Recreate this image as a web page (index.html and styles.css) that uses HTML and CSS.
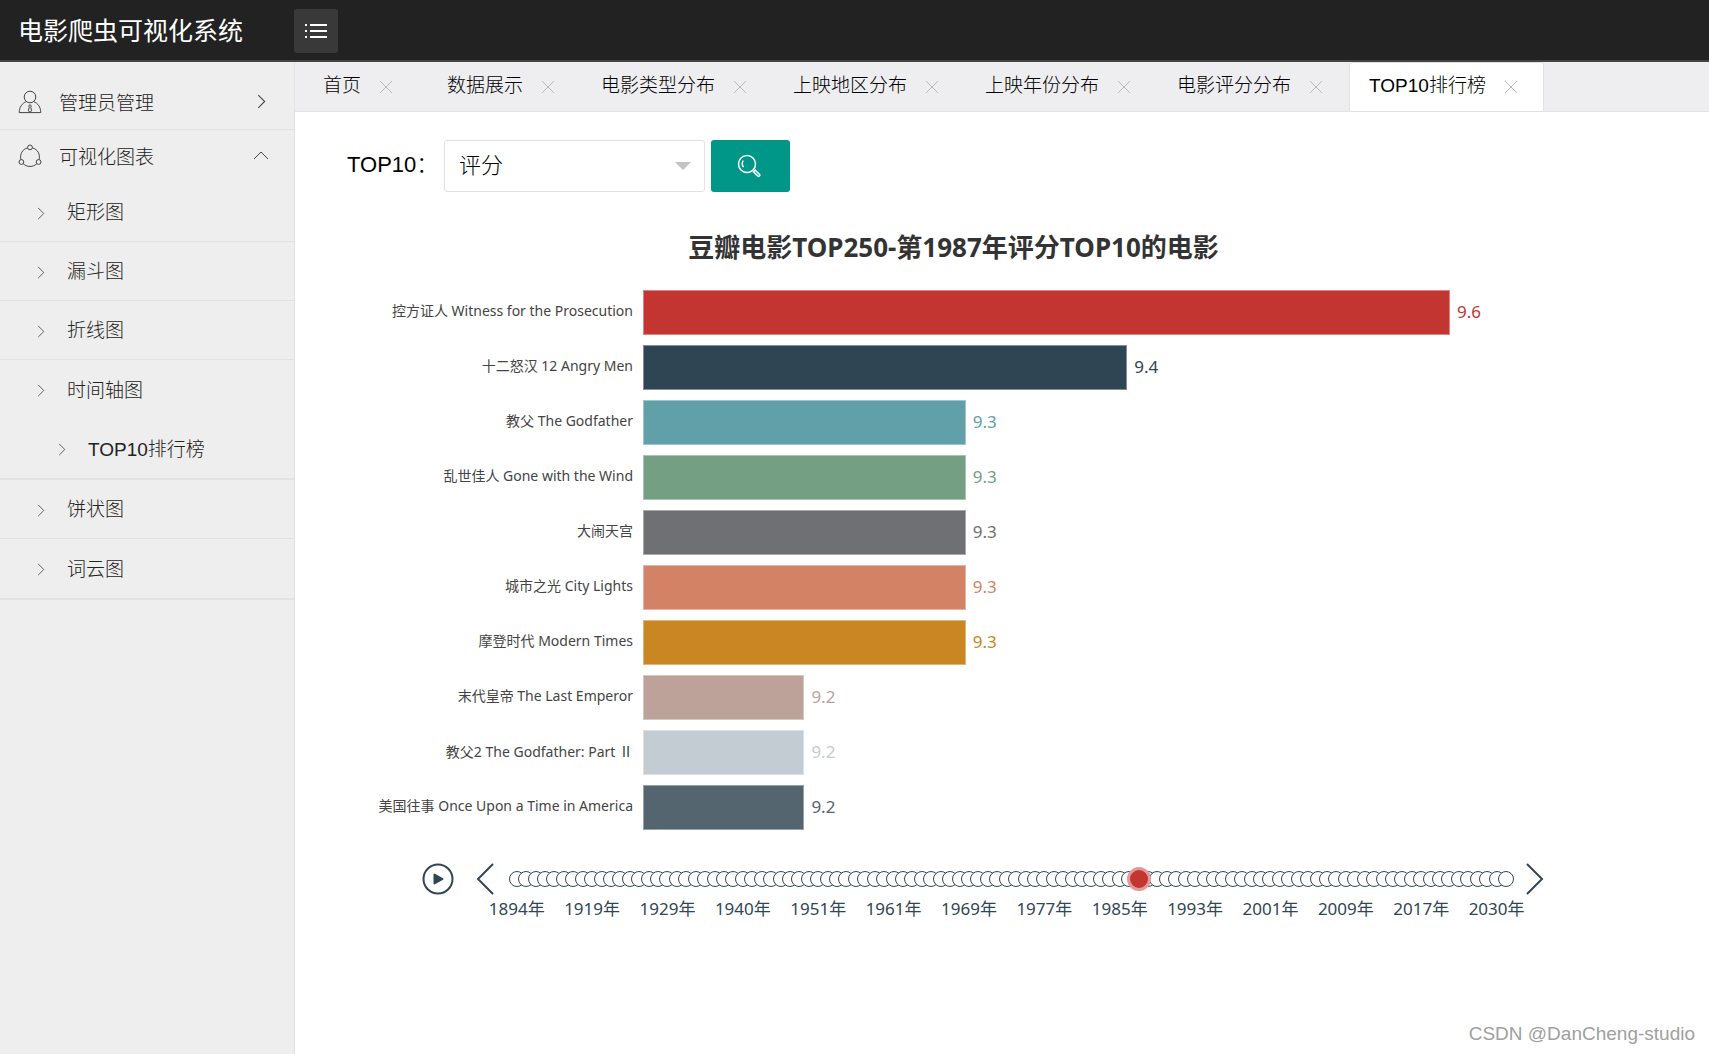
FILE: index.html
```html
<!DOCTYPE html>
<html lang="zh-CN">
<head>
<meta charset="utf-8">
<title>电影爬虫可视化系统</title>
<link rel="stylesheet" href="styles.css">
</head>
<body>
<svg class="sprite" aria-hidden="true">
  <symbol id="i-close" viewBox="0 0 14 14"><path d="M1 1l12 12M13 1L1 13"/></symbol>
  <symbol id="i-right" viewBox="0 0 8 14"><path d="M1 1l6 6-6 6"/></symbol>
</svg>

<header class="header">
  <h1 class="logo">电影爬虫可视化系统</h1>
  <button class="menu-toggle" type="button" aria-label="菜单">
    <svg width="24" height="16" viewBox="0 0 24 16"><path d="M6 2h17M6 8h17M6 14h17M1 2h2M1 8h2M1 14h2"/></svg>
  </button>
</header>

<div class="layout">
  <nav class="sidebar">
    <ul class="menu">
      <li class="group">
        <a class="item" href="#">
          <svg class="icon" width="24" height="24" viewBox="0 0 24 24"><circle cx="12" cy="7" r="5.8"/><path d="M8.3 11.6C4 13.4 1.400 17 1.200 22.600H22.800C22.600 17 20 13.400 15.700 11.600M12 14.500l-1.300 1.500.6 1.300-1 3.500 1.700 1.300 1.700-1.300-1-3.500.6-1.300z"/></svg>
          <span class="name">管理员管理</span>
          <svg class="state" width="9" height="15"><use href="#i-right"/></svg>
        </a>
      </li>
      <li>
        <a class="item" href="#">
          <svg class="icon" width="24" height="24" viewBox="0 0 24 24"><circle cx="12" cy="3.400" r="2.400"/><circle cx="3.400" cy="18" r="2.400"/><circle cx="20.600" cy="18" r="2.400"/><path d="M9.600 3.900C4.300 5.200 1.600 10.300 2.900 15.600M14.400 3.900c5.300 1.300 8 6.400 6.700 11.700M5.200 19.700c3.900 3.700 9.700 3.700 13.600 0"/></svg>
          <span class="name">可视化图表</span>
          <svg class="state up" width="16" height="9" viewBox="0 0 16 9"><path d="M1 8l7-7 7 7"/></svg>
        </a>
        <ul class="submenu">
          <li><a href="#"><svg width="8" height="13"><use href="#i-right"/></svg>矩形图</a></li>
          <li><a href="#"><svg width="8" height="13"><use href="#i-right"/></svg>漏斗图</a></li>
          <li><a href="#"><svg width="8" height="13"><use href="#i-right"/></svg>折线图</a></li>
          <li class="open"><a href="#"><svg width="8" height="13"><use href="#i-right"/></svg>时间轴图</a>
            <ul><li><a class="nested" href="#"><svg width="8" height="13"><use href="#i-right"/></svg>TOP10排行榜</a></li></ul>
          </li>
          <li><a href="#"><svg width="8" height="13"><use href="#i-right"/></svg>饼状图</a></li>
          <li class="open"><a href="#"><svg width="8" height="13"><use href="#i-right"/></svg>词云图</a></li>
        </ul>
      </li>
    </ul>
  </nav>

  <div class="body">
    <ul class="tabs">
      <li class="tab"><a href="#">首页</a><button type="button" aria-label="关闭"><svg width="14" height="14"><use href="#i-close"/></svg></button></li>
      <li class="tab"><a href="#">数据展示</a><button type="button" aria-label="关闭"><svg width="14" height="14"><use href="#i-close"/></svg></button></li>
      <li class="tab"><a href="#">电影类型分布</a><button type="button" aria-label="关闭"><svg width="14" height="14"><use href="#i-close"/></svg></button></li>
      <li class="tab"><a href="#">上映地区分布</a><button type="button" aria-label="关闭"><svg width="14" height="14"><use href="#i-close"/></svg></button></li>
      <li class="tab"><a href="#">上映年份分布</a><button type="button" aria-label="关闭"><svg width="14" height="14"><use href="#i-close"/></svg></button></li>
      <li class="tab"><a href="#">电影评分分布</a><button type="button" aria-label="关闭"><svg width="14" height="14"><use href="#i-close"/></svg></button></li>
      <li class="tab active"><a href="#">TOP10排行榜</a><button type="button" aria-label="关闭"><svg width="14" height="14"><use href="#i-close"/></svg></button></li>
    </ul>

    <main class="content">
      <form class="search">
        <label for="rank">TOP10：</label>
        <div class="select">
          <select id="rank"><option>评分</option></select>
          <svg width="16" height="8" viewBox="0 0 16 8"><path d="M0 0h16L8 8z"/></svg>
        </div>
        <button class="submit" type="button" aria-label="查询">
          <svg width="24" height="24" viewBox="0 0 24 24"><circle cx="10" cy="10" r="8.500"/><path d="M6.400 13.200C4.900 10.800 5 8.300 6.300 6.600"/><path d="M16.400 17.800l1.700-1.700 4.300 4.100c1.200 1.200-.5 2.900-1.700 1.700z"/></svg>
        </button>
      </form>

      <section class="chart">
        <h2>豆瓣电影TOP250-第1987年评分TOP10的电影</h2>
        <ol class="bars">
          <li><span class="film">控方证人 Witness for the Prosecution</span><div class="plot c1"><i class="bar" style="width:100%"></i><b>9.6</b></div></li>
          <li><span class="film">十二怒汉 12 Angry Men</span><div class="plot c2"><i class="bar" style="width:60%"></i><b>9.4</b></div></li>
          <li><span class="film">教父 The Godfather</span><div class="plot c3"><i class="bar" style="width:40%"></i><b>9.3</b></div></li>
          <li><span class="film">乱世佳人 Gone with the Wind</span><div class="plot c4"><i class="bar" style="width:40%"></i><b>9.3</b></div></li>
          <li><span class="film">大闹天宫</span><div class="plot c5"><i class="bar" style="width:40%"></i><b>9.3</b></div></li>
          <li><span class="film">城市之光 City Lights</span><div class="plot c6"><i class="bar" style="width:40%"></i><b>9.3</b></div></li>
          <li><span class="film">摩登时代 Modern Times</span><div class="plot c7"><i class="bar" style="width:40%"></i><b>9.3</b></div></li>
          <li><span class="film">末代皇帝 The Last Emperor</span><div class="plot c8"><i class="bar" style="width:20%"></i><b>9.2</b></div></li>
          <li><span class="film">教父2 The Godfather: Part <span class="numeral">Ⅱ</span></span><div class="plot c9"><i class="bar" style="width:20%"></i><b>9.2</b></div></li>
          <li><span class="film">美国往事 Once Upon a Time in America</span><div class="plot c10"><i class="bar" style="width:20%"></i><b>9.2</b></div></li>
        </ol>

        <div class="timeline">
          <button type="button" aria-label="播放"><svg width="32" height="32" viewBox="0 0 32 32"><circle cx="16" cy="16" r="14.500"/><path class="solid" d="M12.500 11.500v9l8-4.500z"/></svg></button>
          <button class="prev" type="button" aria-label="上一年"><svg width="18" height="32" viewBox="0 0 18 32"><path d="M16.500 1.500L2 16l14.500 14.500"/></svg></button>
          <div class="track" id="track"></div>
          <button class="next" type="button" aria-label="下一年"><svg width="18" height="32" viewBox="0 0 18 32"><path d="M1.500 1.500L16 16 1.500 30.500"/></svg></button>
        </div>
      </section>
      <footer class="credit">CSDN @DanCheng-studio</footer>
    </main>
  </div>
</div>
<script src="timeline.js"></script>
</body>
</html>
```
FILE: styles.css
```css
* { box-sizing: border-box; }
body {
  margin: 0;
  min-height: 100vh;
  display: flex;
  flex-direction: column;
  background: #fff;
  color: #000;
  font: 300 19px/28px "Liberation Sans", "Noto Sans CJK SC", sans-serif;
}
ul, ol { list-style: none; margin: 0; padding: 0; }
a { color: inherit; text-decoration: none; }
button { padding: 0; border: 0; background: none; cursor: pointer; }
svg { display: block; fill: none; stroke: currentColor; flex: none; }
.sprite { position: absolute; width: 0; height: 0; }

.header {
  height: 62px;
  display: flex;
  align-items: center;
  padding-top: 2px;
  background: #222;
  border-bottom: 2px solid #444;
}
.logo {
  width: 294px;
  margin: 0;
  padding-left: 18px;
  color: #fff;
  font-size: 25px;
  line-height: 58px;
  font-weight: 400;
}
.menu-toggle {
  width: 44px;
  height: 44px;
  display: grid;
  place-items: center;
  border-radius: 3px;
  background: #393939;
  color: #fff;
}
.menu-toggle svg { stroke-width: 2; }

.layout { flex: 1; display: flex; }
.sidebar {
  flex: none;
  width: 295px;
  background: #eee;
  border-right: 1px solid #e2e2e2;
  color: #222;
}
.group { padding-top: 14px; border-bottom: 1px solid #e2e2e2; }
.item {
  height: 53px;
  display: flex;
  align-items: center;
  padding: 0 25px 0 18px;
}
.icon { stroke: #444; stroke-width: 1; margin-bottom: 2px; }
.name { flex: 1; padding: 2px 0 0 17px; }
.state { margin: 0 3px 3px 0; stroke: #444; }
.state.up { margin-right: 0; }
.submenu > li { border-bottom: 1px solid #e2e2e2; }
.submenu > .open { border-bottom-width: 2px; }
.submenu a {
  height: 58px;
  display: flex;
  align-items: center;
  gap: 22px;
  padding: 2px 0 0 37px;
}
.submenu .open a { height: 59px; }
.submenu svg { stroke: #555; }
.submenu .nested { padding-left: 58px; }

.body { flex: 1; min-width: 0; display: flex; flex-direction: column; }
.tabs {
  height: 50px;
  display: flex;
  background: #eeeef0;
  border-bottom: 1px solid #e2e2e2;
}
.tab {
  min-width: 132px;
  height: 50px;
  display: flex;
  justify-content: center;
  padding: 0 25px 0 19px;
  border: 1px solid transparent;
  line-height: 46px;
  white-space: nowrap;
}
.tab button { padding: 0 0 0 18px; color: #b8b8b8; }
.tab.active { background: #fff; border-color: #e2e2e2; border-radius: 3px 3px 0 0; }

.content { flex: 1; display: flex; flex-direction: column; padding: 28px 14px 6px 52px; }
.search { display: flex; height: 52px; font-size: 22px; }
.search label { width: 97px; line-height: 50px; white-space: nowrap; }
.select { position: relative; width: 261px; margin-right: 6px; }
.select select {
  width: 100%;
  height: 52px;
  padding: 0 14px;
  appearance: none;
  border: 1px solid #e2e2e2;
  border-radius: 3px;
  background: #fff;
  color: #000;
  font: inherit;
}
.select svg { position: absolute; right: 14px; top: 22px; fill: #c2c2c2; stroke: none; pointer-events: none; }
.submit {
  width: 79px;
  display: grid;
  place-items: center;
  border-radius: 3px;
  background: #009688;
  color: #fff;
}
.submit svg { stroke-width: 1.5; margin-right: 4px; }

.chart { font-family: "Noto Sans", "Noto Sans CJK SC", sans-serif; }
.chart h2 {
  margin: 38px 97px 26px 0;
  padding-right: 38px;
  color: #333;
  font-size: 26px;
  line-height: 34px;
  font-weight: 700;
  text-align: center;
}
.bars { display: grid; gap: 10px; padding-right: 245px; }
.bars li { display: flex; align-items: center; height: 45px; }
.film {
  flex: none;
  width: 286px;
  padding-bottom: 3px;
  color: #444;
  font-size: 14px;
  font-weight: 400;
  text-align: right;
  white-space: nowrap;
}
.numeral { font-family: "Noto Sans CJK JP", sans-serif; }
.plot { flex: 1; display: flex; align-items: center; margin-left: 10px; color: var(--c); }
.bar { flex: none; height: 45px; background: var(--c); border: 1px solid rgba(255, 255, 255, 0.4); }
.plot b { margin-left: 7px; padding-bottom: 2px; font-size: 17px; font-weight: 400; }
.c1 { --c: #c23531; }
.c2 { --c: #2f4554; }
.c3 { --c: #61a0a8; }
.c4 { --c: #749f83; }
.c5 { --c: #6e7074; }
.c6 { --c: #d48265; }
.c7 { --c: #ca8622; }
.c8 { --c: #bda29a; }
.c9 { --c: #c4ccd3; }
.c10 { --c: #546570; }

.timeline {
  display: flex;
  align-items: flex-start;
  margin-top: 33px;
  padding: 0 151px 0 75px;
  color: #304654;
}
.timeline button { flex: none; color: inherit; stroke-width: 2; }
.timeline svg { stroke-linecap: round; }
.timeline .solid { fill: currentColor; stroke-linejoin: round; }
.timeline .prev { margin: 0 18px 0 22px; }
.timeline .next { margin-left: 16px; }
.track { flex: 1; min-width: 0; display: flex; }
.year {
  flex: 1 1 0;
  min-width: 0;
  display: flex;
  flex-direction: column;
  align-items: center;
  font-size: 17px;
  font-weight: 400;
  white-space: nowrap;
}
.dot {
  flex: none;
  width: 16px;
  height: 16px;
  margin: 8px 0;
  position: relative;
  border: 1px solid #304654;
  border-radius: 50%;
  background: #fff;
}
.current .dot {
  z-index: 1;
  width: 24px;
  height: 24px;
  margin: 4px 0;
  border: 3px solid #e19a98;
  background: #c23531;
}

.credit {
  margin-top: auto;
  color: #a0a0a0;
  font-size: 19px;
  text-align: right;
}
```
FILE: timeline.js
```js
// One cell per year; every eighth year carries a caption.
const COUNT = 106;
const CURRENT = 66;
const captions = [1894, 1919, 1929, 1940, 1951, 1961, 1969, 1977, 1985, 1993, 2001, 2009, 2017, 2030];
const track = document.getElementById('track');

for (let i = 0; i < COUNT; i++) {
  const year = document.createElement('div');
  year.className = i === CURRENT ? 'year current' : 'year';
  const dot = document.createElement('span');
  dot.className = 'dot';
  year.append(dot);
  if (i % 8 === 0) {
    const caption = document.createElement('span');
    caption.textContent = captions[i / 8] + '年';
    year.append(caption);
  }
  track.append(year);
}
```
